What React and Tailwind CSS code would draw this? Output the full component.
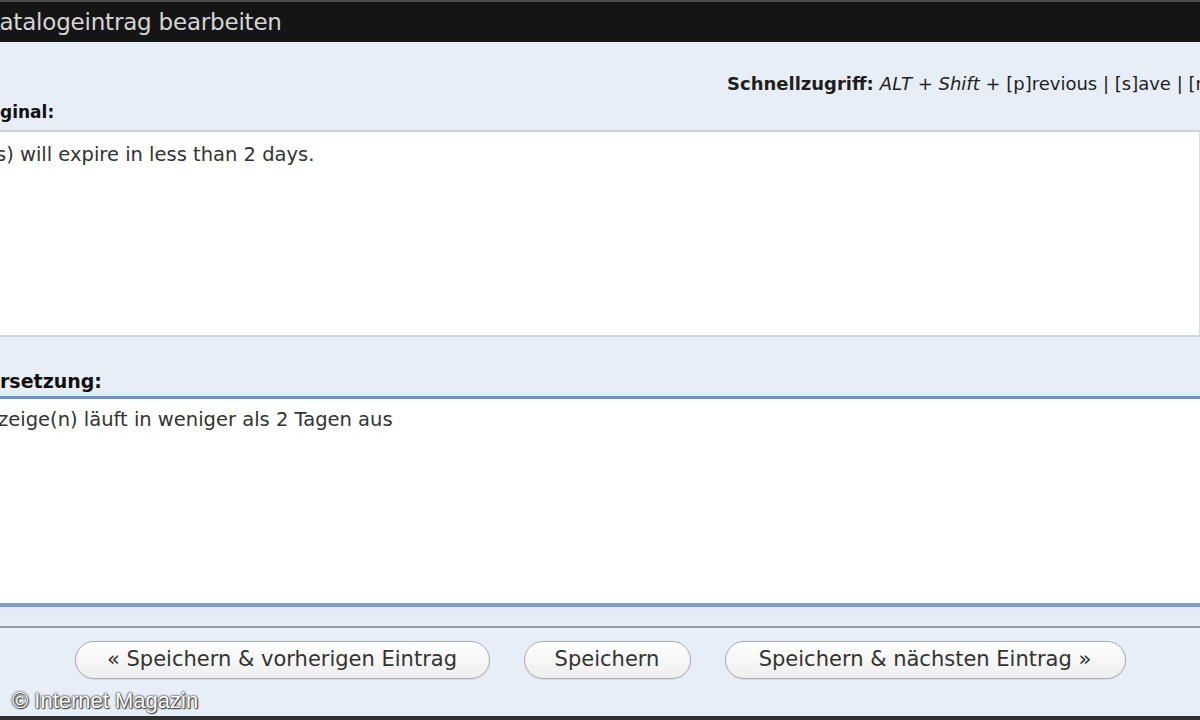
import React from 'react';

const BUTTONS = [
  { label: '« Speichern & vorherigen Eintrag', width: 'w-[415px]' },
  { label: 'Speichern', width: 'w-[167px]' },
  { label: 'Speichern & nächsten Eintrag »', width: 'w-[401px]' },
];

export default function App() {
  return (
    <div className="relative w-[1200px] h-[720px] overflow-hidden bg-[#e7eef7] font-['DejaVu_Sans',sans-serif] text-[#222]">

      {/* ── Titelleiste ── */}
      <div className="h-[42px] bg-[#151515] border-t-2 border-[#4a4a4a] flex items-center whitespace-nowrap">
        <span className="-ml-[15px] text-[23px] text-[#d6d6d6] tracking-[-0.2px]">Katalogeintrag bearbeiten</span>
      </div>

      {/* ── Kopfbereich ── */}
      <div className="h-[88px] pt-[28px] whitespace-nowrap">
        <div className="pl-[727px] text-[18px] text-[#1e1e1e]">
          <span className="font-bold">Schnellzugriff:</span>
          <span className="ml-[6px]"><i>ALT</i> + <i>Shift</i> + [p]revious | [s]ave | [n]ext</span>
        </div>
        <div className="mt-[3px] font-bold text-[17px] text-[#111]">ginal:</div>
      </div>

      {/* ── Original ── */}
      <div className="h-[205px] bg-white border-t-2 border-[#cfd3d8] border-r border-r-[#d8dde3] pt-[8px]">
        <p className="-ml-[4px] text-[19.5px] text-[#333] whitespace-nowrap">s) will expire in less than 2 days.</p>
      </div>

      {/* ── Übersetzung Label ── */}
      <div className="h-[61px] border-t-2 border-[#d2d6db] bg-[#e7eef7] flex items-end pb-[1px] whitespace-nowrap">
        <span className="font-bold text-[19px] text-[#111]">rsetzung:</span>
      </div>

      {/* ── Übersetzung ── */}
      <div className="h-[211px] bg-white border-t-[3px] border-[#6f90c2] shadow-[0_-3px_3px_#d4eefa] border-b-[4px] border-b-[#7d9dca] pt-[6px]">
        <p className="-ml-[2px] text-[19.5px] text-[#333] whitespace-nowrap">zeige(n) läuft in weniger als 2 Tagen aus</p>
      </div>

      {/* ── Schaltflächen ── */}
      <div className="h-[19px] bg-[#e4ecf6]" />
      <div className="h-[94px] border-t-2 border-[#9a9da1] border-b-4 border-b-[#2e2e2e] flex justify-center gap-[34px] pt-[13px]">
        {BUTTONS.map(b => (
          <button
            key={b.label}
            className={`${b.width} h-[38px] rounded-full border border-[#a9acb0] bg-gradient-to-b from-white to-[#eeeeee] text-[21px] text-[#333] shadow-[0_1px_1px_rgba(0,0,0,0.08)] whitespace-nowrap`}
          >
            {b.label}
          </button>
        ))}
      </div>

      {/* ── Wasserzeichen ── */}
      <div className="absolute left-[12px] top-[684px] font-['Liberation_Sans',Arial,sans-serif] text-[22px] text-white [text-shadow:0_0_2px_#333,0_0_2px_#333,1px_1px_1px_#444]">
        © Internet Magazin
      </div>
    </div>
  );
}
